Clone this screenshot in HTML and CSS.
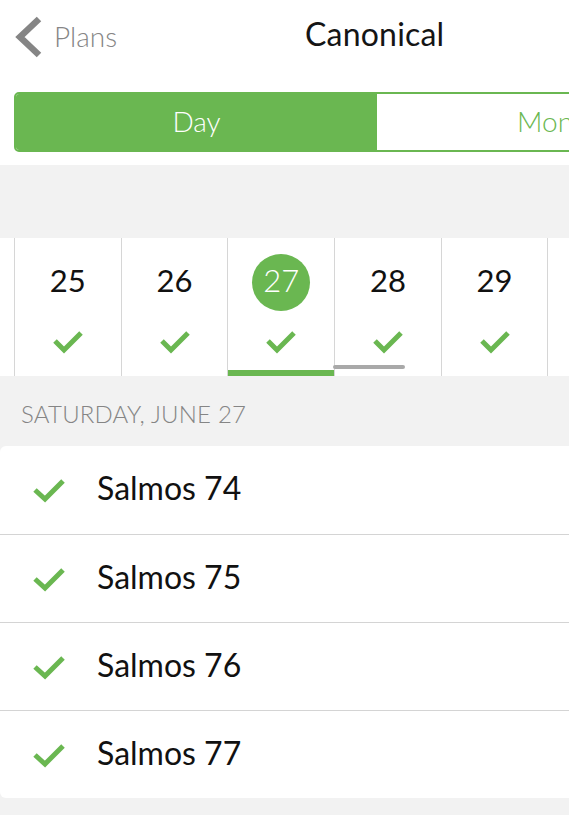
FILE: index.html
```html
<!DOCTYPE html>
<html>
<head>
<meta charset="utf-8">
<link rel="stylesheet" href="styles.css">
</head>
<body>
<div class="page">
  <header class="nav">
    <div class="back">
      <svg class="chev" width="30" height="42" viewBox="0 0 30 42"><polyline points="25,3 6,21 25,39" fill="none" stroke="#858585" stroke-width="6.5" stroke-linecap="butt" stroke-linejoin="miter"/></svg>
      <span class="back-label">Plans</span>
    </div>
    <div class="title">Canonical</div>
  </header>

  <div class="seg-wrap">
    <div class="seg">
      <div class="seg-item active">Day</div>
      <div class="seg-item">Month</div>
    </div>
  </div>

  <div class="band"></div>

  <div class="strip">
    <div class="cell lead"></div>
    <div class="cell"><span class="num">25</span><svg class="chk" width="32" height="26" viewBox="0 0 32 26"><polyline points="3,13 12,22 29,5" fill="none" stroke="#6ab751" stroke-width="5"/></svg></div>
    <div class="cell"><span class="num">26</span><svg class="chk" width="32" height="26" viewBox="0 0 32 26"><polyline points="3,13 12,22 29,5" fill="none" stroke="#6ab751" stroke-width="5"/></svg></div>
    <div class="cell selected"><span class="num today">27</span><svg class="chk" width="32" height="26" viewBox="0 0 32 26"><polyline points="3,13 12,22 29,5" fill="none" stroke="#6ab751" stroke-width="5"/></svg></div>
    <div class="cell"><span class="num">28</span><svg class="chk" width="32" height="26" viewBox="0 0 32 26"><polyline points="3,13 12,22 29,5" fill="none" stroke="#6ab751" stroke-width="5"/></svg></div>
    <div class="cell"><span class="num">29</span><svg class="chk" width="32" height="26" viewBox="0 0 32 26"><polyline points="3,13 12,22 29,5" fill="none" stroke="#6ab751" stroke-width="5"/></svg></div>
    <div class="cell"></div>
    <div class="scroll-ind"></div>
  </div>

  <div class="section-head">SATURDAY, JUNE 27</div>

  <ul class="list">
    <li class="row"><svg class="chk" width="34" height="26" viewBox="0 0 34 26"><polyline points="3,13 13,22 31,4" fill="none" stroke="#6ab751" stroke-width="5"/></svg><span>Salmos 74</span></li>
    <li class="row"><svg class="chk" width="34" height="26" viewBox="0 0 34 26"><polyline points="3,13 13,22 31,4" fill="none" stroke="#6ab751" stroke-width="5"/></svg><span>Salmos 75</span></li>
    <li class="row"><svg class="chk" width="34" height="26" viewBox="0 0 34 26"><polyline points="3,13 13,22 31,4" fill="none" stroke="#6ab751" stroke-width="5"/></svg><span>Salmos 76</span></li>
    <li class="row"><svg class="chk" width="34" height="26" viewBox="0 0 34 26"><polyline points="3,13 13,22 31,4" fill="none" stroke="#6ab751" stroke-width="5"/></svg><span>Salmos 77</span></li>
  </ul>
</div>
</body>
</html>
```
FILE: styles.css
```css
* { box-sizing: border-box; }
html, body {
  margin: 0;
  padding: 0;
  background: #f2f2f2;
  overflow: hidden;
}
body {
  font-family: Lato, "Open Sans", sans-serif;
  width: 569px;
  height: 815px;
}
.page {
  width: 569px;
  overflow: hidden;
}
.nav {
  background: #fff;
  height: 74px;
  display: flex;
  align-items: center;
  position: relative;
}
.back {
  display: flex;
  align-items: center;
  padding-left: 14px;
  gap: 10px;
}
.back-label {
  font-size: 28px;
  font-weight: 300;
  color: #868686;
  margin-top: -2px;
}
.title {
  position: absolute;
  left: 305px;
  top: 14px;
  font-size: 32px;
  font-weight: 400;
  color: #151515;
  letter-spacing: 0.2px;
}
.seg-wrap {
  background: #fff;
  height: 91px;
  padding-top: 18px;
  padding-left: 14px;
}
.seg {
  display: flex;
  width: 724px;
  height: 60px;
  border: 2px solid #6ab751;
  border-radius: 5px;
  overflow: hidden;
}
.seg-item {
  flex: 0 0 361px;
  display: flex;
  align-items: center;
  justify-content: center;
  font-size: 28px;
  font-weight: 300;
  color: #6ab751;
  background: #fff;
  padding-bottom: 2px;
}
.seg-item.active {
  background: #6ab751;
  color: #fff;
}
.band {
  height: 73px;
  background: #f2f2f2;
}
.strip {
  background: #fff;
  height: 138px;
  display: flex;
  position: relative;
}
.cell {
  flex: 0 0 106.7px;
  border-left: 1px solid #d6d6d6;
  display: flex;
  flex-direction: column;
  align-items: center;
  position: relative;
}
.cell.lead {
  flex: 0 0 14px;
  border-left: none;
}
.num {
  margin-top: 16px;
  width: 58px;
  height: 57px;
  border-radius: 50%;
  display: flex;
  align-items: center;
  justify-content: center;
  padding-bottom: 5px;
  font-size: 31px;
  font-weight: 400;
  color: #111;
}
.num.today {
  background: #6ab751;
  color: #fff;
  font-weight: 300;
}
.cell .chk {
  margin-top: 17px;
}
.cell.selected::after {
  content: "";
  position: absolute;
  left: 0;
  right: 0;
  bottom: 0;
  height: 6px;
  background: #6ab751;
}
.scroll-ind {
  position: absolute;
  left: 333px;
  top: 127px;
  width: 72px;
  height: 4px;
  border-radius: 2px;
  background: #a9a9a9;
}
.section-head {
  height: 70px;
  display: flex;
  align-items: center;
  padding-left: 21px;
  padding-top: 4px;
  font-size: 24px;
  font-weight: 300;
  color: #858585;
  letter-spacing: 0.2px;
}
.list {
  list-style: none;
  margin: 0;
  padding: 0;
  background: #fff;
  border-radius: 6px 0 0 6px;
}
.row {
  height: 88px;
  display: flex;
  align-items: center;
  padding-left: 32px;
  border-top: 1px solid #d4d4d4;
  font-size: 32px;
  color: #111;
}
.row span {
  margin-top: -5px;
}
.row:first-child { border-top: none; }
.row .chk {
  margin-right: 31px;
}
```
